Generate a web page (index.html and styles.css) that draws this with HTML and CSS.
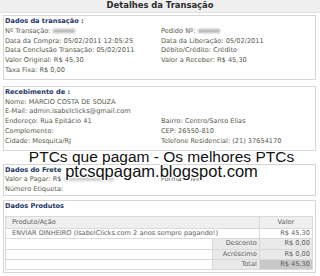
FILE: index.html
```html
<!DOCTYPE html>
<html>
<head>
<meta charset="utf-8">
<link rel="stylesheet" href="styles.css">
</head>
<body>
<div class="page">
  <div class="head">Detalhes da Transação</div>

  <div class="box b1">
    <div class="ttl">Dados da transação :</div>
    <div class="cols">
      <div class="col">
        <div>Nº Transação: <span class="blur"></span></div>
        <div>Data da Compra: 05/02/2011 12:05:25</div>
        <div>Data Conclusão Transação: 05/02/2011</div>
        <div>Valor Original: R$ 45,30</div>
        <div>Taxa Fixa: R$ 0,00</div>
      </div>
      <div class="col">
        <div>Pedido Nº: <span class="blur"></span></div>
        <div>Data da Liberação: 05/02/2011</div>
        <div>Débito/Crédito: Crédito</div>
        <div>Valor a Receber: R$ 45,30</div>
      </div>
    </div>
  </div>

  <div class="box b2">
    <div class="ttl">Recebimento de :</div>
    <div class="grid">
      <div>Nome: MARCIO COSTA DE SOUZA</div><div></div>
      <div>E-Mail: admin.isabelclicks@gmail.com</div><div></div>
      <div>Endereço: Rua Epitácio 41</div><div>Bairro: Centro/Santo Elias</div>
      <div>Complemento:</div><div>CEP: 26550-810</div>
      <div>Cidade: Mesquita/RJ</div><div>Telefone Residencial: (21) 37654170</div>
    </div>
  </div>

  <div class="box b3">
    <div class="ttl">Dados do Frete</div>
    <div class="grid">
      <div>Valor a Pagar: R$ <span class="blur wide"></span></div><div>Forma Envio:</div>
      <div>Número Etiqueta:</div><div></div>
    </div>
  </div>

  <div class="box b4">
    <div class="ttl">Dados Produtos</div>
    <table class="prod">
      <tr class="th"><td colspan="2" class="name">Produto/Ação</td><td class="val c">Valor</td></tr>
      <tr><td colspan="2" class="name">ENVIAR DINHEIRO (IsabelClicks.com 2 anos sempre pagando!)</td><td class="val">R$ 45,30</td></tr>
      <tr><td class="empty"></td><td class="lbl">Desconto</td><td class="val g">R$ 0,00</td></tr>
      <tr><td class="empty"></td><td class="lbl">Acréscimo</td><td class="val g">R$ 0,00</td></tr>
      <tr><td class="empty"></td><td class="lbl">Total</td><td class="val dg">R$ 45,30</td></tr>
    </table>
  </div>

  <div class="mark">
    <div>PTCs que pagam - Os melhores PTCs</div>
    <div class="l2">ptcsqpagam.blogspot.com</div>
  </div>
</div>
</body>
</html>
```

FILE: styles.css
```css
html, body {
  margin: 0;
  padding: 0;
  background: #ffffff;
}
.page {
  position: relative;
  width: 320px;
  height: 276px;
  overflow: hidden;
  font-family: "DejaVu Sans", Verdana, sans-serif;
  font-size: 6.6px;
  color: #535a4c;
}
.head {
  height: 12px;
  line-height: 11px;
  background: #efefef;
  border-bottom: 1px solid #e2e2e2;
  text-align: center;
  font-weight: bold;
  font-size: 8.4px;
  color: #2b2b2b;
}
.box {
  margin: 0 4px 0 3px;
  border: 1px solid #d6d6d6;
  padding: 1px 2px 3px 1px;
  line-height: 9.8px;
}
.b1 { margin-top: 2px; }
.b2 { margin-top: 6px; }
.b3 { margin-top: 13px; padding-bottom: 0; }
.b4 { margin-top: 4px; padding-bottom: 2px; }
.ttl {
  font-weight: bold;
  color: #1f3566;
}
.cols {
  display: grid;
  grid-template-columns: 156px 1fr;
}
.grid {
  display: grid;
  grid-template-columns: 156px 1fr;
}
.blur {
  display: inline-block;
  width: 22px;
  height: 4px;
  background: #b8b8b8;
  filter: blur(0.8px);
  vertical-align: 0px;
}
.blur.wide { width: 50px; background: #d0d0d0; }
.prod {
  width: 100%;
  border-collapse: collapse;
  margin-top: 4px;
  color: #5e5e5e;
}
.prod td {
  border: 1px solid #d9d9d9;
  height: 9.4px;
  padding: 0 2px;
  line-height: 9px;
  white-space: nowrap;
}
.prod .th td {
  background: #efefef;
  height: 11px;
}
.prod .name { padding-left: 6px; }
.prod .empty { width: 201px; }
.prod .lbl { background: #e9e9e9; text-align: right; width: 42px; }
.prod .val { text-align: right; width: 48px; }
.prod .val.c { text-align: center; }
.prod .val.g { background: #e9e9e9; }
.prod .val.dg { background: #c8c8c8; }
.mark {
  position: absolute;
  left: 0;
  right: 0;
  top: 150px;
  text-align: center;
  font-family: "Liberation Sans", Arial, sans-serif;
  font-size: 15.5px;
  line-height: 14px;
  color: #111;
  padding-left: 3px;
  text-shadow: 1px 0 0 #fff, -1px 0 0 #fff, 0 1px 0 #fff, 0 -1px 0 #fff, 1px 1px 0 #fff, -1px -1px 0 #fff, 1px -1px 0 #fff, -1px 1px 0 #fff;
}
.mark .l2 {
  font-size: 16.5px;
  line-height: 15px;
}
```
